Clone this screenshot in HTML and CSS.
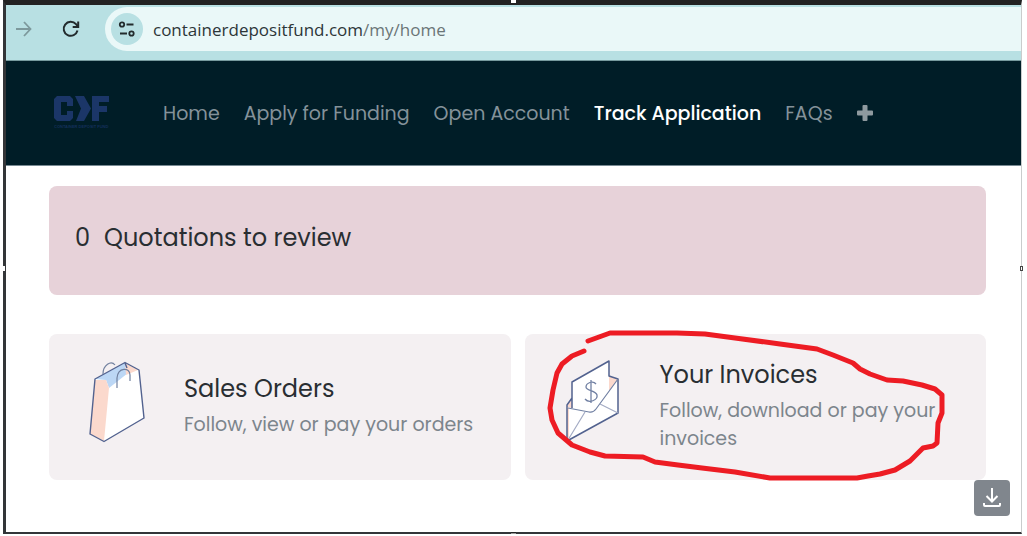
FILE: index.html
```html
<!DOCTYPE html>
<html lang="en">
<head>
<meta charset="utf-8">
<meta name="viewport" content="width=device-width, initial-scale=1">
<title>My Home | Container Deposit Fund</title>
<link rel="stylesheet" href="styles.css">
</head>
<body>
<div class="frame">
  <span class="handle handle-top"></span>
  <span class="handle handle-left"></span>
  <span class="handle handle-right"></span>
  <span class="handle handle-bottom"></span>
  <div class="browser">
    <button class="tool" aria-label="Forward">
      <svg width="20" height="20" viewBox="0 0 20 20" fill="none" stroke="#7d999c" stroke-width="1.8"><path d="M2 10h14.500M10 3l6.500 7-6.500 7"/></svg>
    </button>
    <button class="tool" aria-label="Reload">
      <svg width="20" height="20" viewBox="0 0 20 20" fill="none" stroke="#222b2d" stroke-width="2"><path d="M16.500 11.500A7 7 0 1 1 15 5.200L17 7.500"/><path d="M17.200 2.500v5.500h-5.500"/></svg>
    </button>
    <div class="address">
      <button class="site-info" aria-label="Site information">
        <svg width="18" height="18" viewBox="0 0 18 18" fill="none" stroke="#222b2d" stroke-width="1.8"><circle cx="4" cy="4.500" r="2.200"/><path d="M8.500 4.500h7M2 13.500h7"/><circle cx="13.500" cy="13.500" r="2.200"/></svg>
      </button>
      <div class="url"><span class="host">containerdepositfund.com</span>/my/home</div>
    </div>
  </div>
  <header class="navbar">
    <a class="logo" href="#" aria-label="Container Deposit Fund">
      <svg width="56" height="34" viewBox="0 0 56 34">
        <path fill="#1b3668" fill-rule="evenodd" d="M3 0H16L19 3V10H13V6H7V19H13V15H19V22L16 25H3L0 22V3ZM21 0H30L37 12.500 30 25H22L27 12.500ZM38 0H55V6H45V10H53V16H45V25H38Z"/>
        <text x="0" y="32" class="logo-text">CONTAINER DEPOSIT FUND</text>
      </svg>
    </a>
    <nav class="menu">
      <a href="#">Home</a>
      <a href="#">Apply for Funding</a>
      <a href="#">Open Account</a>
      <a href="#" class="active" aria-current="page">Track Application</a>
      <a href="#">FAQs</a>
      <button class="more" aria-label="More">
        <svg width="16" height="16" viewBox="0 0 16 16"><path fill="#8f9a9f" d="M6.500 0h3q1 0 1 1v4.500H15q1 0 1 1v3q0 1-1 1h-4.500V15q0 1-1 1h-3q-1 0-1-1v-4.500H1q-1 0-1-1v-3q0-1 1-1h4.500V1q0-1 1-1Z"/></svg>
      </button>
    </nav>
  </header>
  <main class="content">
    <a class="notice" href="#"><span>0</span><span>Quotations to review</span></a>
    <div class="cards">
      <a class="card" href="#">
        <svg class="art" width="60" height="86" viewBox="0 0 60 86" stroke-linejoin="round">
          <path fill="#fff" d="M9 21L39 4.500 53 12 58 60 18 83.500 4 76Z"/>
          <path fill="#bcd7f5" d="M9 21L39 5 42 15 23 30 20 22Z"/>
          <path fill="#fbd9cd" d="M9 22L20 22 23 30 18 83 4 76ZM39 5L52 12 40 17Z"/>
          <path fill="none" stroke="#52628f" stroke-width="1.400" d="M9 21L39 4.500 53 12 58 60 18 83.500 4 76ZM39 5L41 10"/>
          <path fill="none" stroke="#71809f" stroke-width="1.200" d="M17 16C17 7 25 2 29 7M31 30V20C32 9 44 9 44 17V23"/>
        </svg>
        <span class="card-body"><span class="card-title">Sales Orders</span><span class="card-text">Follow, view or pay your orders</span></span>
      </a>
      <a class="card" href="#">
        <svg class="art" width="60" height="86" viewBox="-2 0 60 86" stroke-linejoin="round">
          <path fill="#fff" d="M3 47L8 40 45 18 54 21V55L3 83Z"/>
          <path fill="#fbd9cd" d="M3 48L8 41V50L3 49ZM45 18L54 21 45 33ZM3 50H5V79L3 83Z"/>
          <path fill="#fff" d="M8 50V24L45 3V33L30 53Z"/>
          <path fill="none" stroke="#52628f" stroke-width="1.500" d="M8 50V24L45 3V18L54 21V55L3 83V47L8 40"/>
          <path fill="none" stroke="#7180a3" stroke-width="1.200" d="M4 50L25 54Q29 55 32 51L54 21"/>
          <path fill="none" stroke="#a3abc4" stroke-width="1.200" d="M21 54L4 82M36 46L54 55"/>
          <path fill="none" stroke="#7180a3" stroke-width="1.300" d="M32 26C29 22 22 25 22 29S32 32 33 37 25 46 21 41M27 22V45"/>
        </svg>
        <span class="card-body"><span class="card-title">Your Invoices</span><span class="card-text">Follow, download or pay your invoices</span></span>
        <svg class="scribble" width="430" height="146" viewBox="0 0 430 146" fill="none" stroke="#ed1c24" stroke-width="5" stroke-linecap="round" stroke-linejoin="round"><path d="M59 17L47 22 37 30 32 39 28 56 25 74 27 86 33 99 47 111 65 118 80 122 118 123 130 128 153 131 177 134 210 138 245 144 332 144 343 142 355 140 370 136 385 127 398 114 408 112 412 109 413 89 417 79V61L410 55 397 51 378 47 362 46 345 40 335 35 328 29 308 21 292 15 255 10 210 4 180 0 152-1H85L63 7"/></svg>
      </a>
    </div>
  </main>
  <button class="download" aria-label="Download">
    <svg width="20" height="20" viewBox="0 0 20 20" fill="none" stroke="#fff" stroke-width="2"><path d="M10 0v13M4.500 8L10 13.500 15.500 8M2 15v2q0 1 1 1h14q1 0 1-1v-2"/></svg>
  </button>
</div>
</body>
</html>
```
FILE: styles.css
```css
* { box-sizing: border-box; }
body { margin: 0; background: #fff; font-family: Poppins, Inter, "Noto Sans", sans-serif; }
button { border: 0; padding: 0; background: none; font: inherit; }
a { color: inherit; text-decoration: none; }
svg { display: block; flex: none; }
.frame {
  position: relative;
  min-height: 534px;
  margin: 0 5px 2px 3px;
  border: solid #333538;
  border-width: 5px 1px 2px 3px;
  border-top-color: #222;
  border-right-color: #c9cccc;
}
.handle { position: absolute; z-index: 2; width: 5px; height: 5px; background: #fff; }
.handle-top { top: -6px; left: calc(50% - 3px); height: 4px; }
.handle-left { top: 261px; left: -4px; width: 3px; }
.handle-right { top: 261px; right: -2px; width: 3px; border: 1px solid #444; }
.handle-bottom { bottom: -2px; left: calc(50% - 3px); height: 2px; background: #999; border-top: 1px solid #222; }
.browser {
  display: flex;
  align-items: flex-start;
  height: 56px;
  padding: 2px 0 0 8px;
  background: #b8e0e3;
  border-bottom: 1px solid #779a9e;
}
.tool { display: flex; align-items: center; height: 44px; margin-right: 27px; }
.tool + .tool { margin-right: 24px; }
.address {
  display: flex;
  flex: 1;
  align-items: center;
  gap: 10px;
  height: 44px;
  padding-left: 6px;
  background: #eaf8f8;
  border-radius: 22px 0 0 22px;
}
.site-info { display: grid; place-items: center; width: 32px; height: 32px; border-radius: 50%; background: #b8e0e3; }
.url { color: #6a7577; font: 17px "Open Sans", "Noto Sans", sans-serif; }
.host { color: #2d3638; }
.navbar {
  display: flex;
  align-items: center;
  gap: 53px;
  height: 105px;
  padding-left: 48px;
  background: #001d27;
  border-bottom: 1px solid #788a93;
}
.logo-text { fill: #14305a; font: bold 4px "Liberation Sans", sans-serif; }
.menu { display: flex; align-items: center; gap: 24px; color: #84929a; font-size: 19px; white-space: nowrap; }
.active { color: #fff; font-weight: 500; }
.content { padding: 20px 35px 52px 43px; color: #292e32; }
.notice {
  display: flex;
  gap: 14px;
  height: 109px;
  padding: 34px 26px;
  border-radius: 8px;
  background: #e7d2d9;
  font-size: 24px;
  line-height: 36px;
}
.cards { display: grid; grid-template-columns: 1fr 1fr; gap: 14px; margin-top: 39px; }
.card {
  position: relative;
  display: flex;
  align-items: center;
  gap: 38px;
  min-height: 146px;
  padding: 16px 16px 18px 37px;
  border-radius: 8px;
  background: #f4f0f2;
}
.art { margin-bottom: 10px; }
.card-body { display: flex; flex-direction: column; gap: 6px; max-width: 304px; }
.card-title { font-size: 24px; line-height: 32px; }
.card-text { color: #7c858c; font-size: 19px; line-height: 28px; }
.scribble { position: absolute; top: 0; left: 0; overflow: visible; }
.download {
  position: absolute;
  right: 11px;
  bottom: 16px;
  display: grid;
  place-items: center;
  width: 36px;
  height: 36px;
  border-radius: 4px;
  background: #80868d;
}
```
